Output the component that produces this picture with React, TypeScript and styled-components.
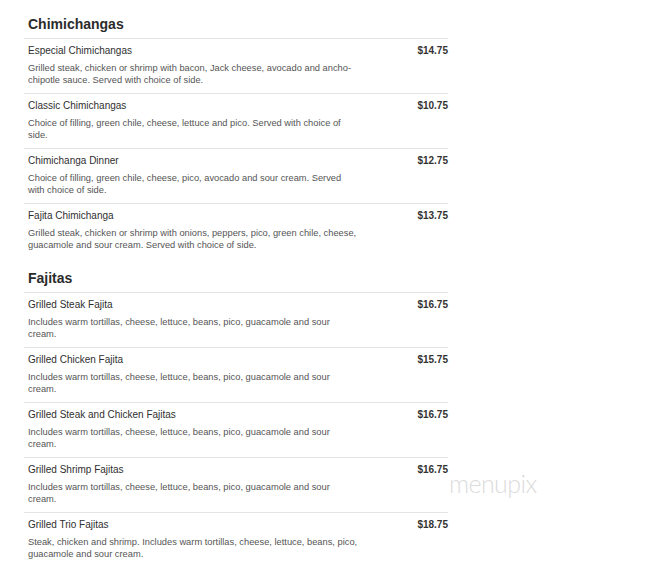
import React from 'react'
import styled, { createGlobalStyle } from 'styled-components'

const GlobalStyle = createGlobalStyle`
  html, body {
    margin: 0;
    padding: 0;
    background: #fff;
  }
  body {
    font-family: "Liberation Sans", Arial, sans-serif;
  }
`

const Page = styled.div`
  position: relative;
  width: 661px;
  height: 567px;
  overflow: hidden;
  padding: 16px 0 0 24px;
  box-sizing: border-box;
`

const Menu = styled.div`
  width: 424px;
`

const Section = styled.section`
  & + & {
    margin-top: 12px;
  }
`

const SectionTitle = styled.h2`
  margin: 0;
  padding: 0 0 5px 4px;
  font-size: 14px;
  line-height: 17px;
  font-weight: bold;
  color: #2b2b2b;
`

const Item = styled.div`
  display: flex;
  justify-content: space-between;
  align-items: flex-start;
  border-top: 1px solid #e4e4e4;
  padding: 5px 0 6px 4px;
  height: 55px;
  box-sizing: border-box;
`

const ItemBody = styled.div`
  width: 332px;
`

const ItemName = styled.div`
  font-size: 10px;
  line-height: 14px;
  color: #2f2f2f;
`

const ItemDesc = styled.div`
  margin-top: 3.5px;
  font-size: 9.3px;
  line-height: 12.5px;
  color: #555;
`

const Price = styled.div`
  font-size: 10px;
  line-height: 14px;
  font-weight: bold;
  color: #333;
`

const Watermark = styled.div`
  position: absolute;
  left: 449px;
  top: 477px;
  font-family: Lato, "Open Sans", sans-serif;
  font-weight: 300;
  font-size: 25px;
  line-height: 12px;
  letter-spacing: -0.6px;
  color: #dcdcdc;
  pointer-events: none;
`

type MenuItem = { name: string; desc: string; price: string }

const sections: { title: string; items: MenuItem[] }[] = [
  {
    title: 'Chimichangas',
    items: [
      {
        name: 'Especial Chimichangas',
        desc: 'Grilled steak, chicken or shrimp with bacon, Jack cheese, avocado and ancho-chipotle sauce. Served with choice of side.',
        price: '$14.75',
      },
      {
        name: 'Classic Chimichangas',
        desc: 'Choice of filling, green chile, cheese, lettuce and pico. Served with choice of side.',
        price: '$10.75',
      },
      {
        name: 'Chimichanga Dinner',
        desc: 'Choice of filling, green chile, cheese, pico, avocado and sour cream. Served with choice of side.',
        price: '$12.75',
      },
      {
        name: 'Fajita Chimichanga',
        desc: 'Grilled steak, chicken or shrimp with onions, peppers, pico, green chile, cheese, guacamole and sour cream. Served with choice of side.',
        price: '$13.75',
      },
    ],
  },
  {
    title: 'Fajitas',
    items: [
      {
        name: 'Grilled Steak Fajita',
        desc: 'Includes warm tortillas, cheese, lettuce, beans, pico, guacamole and sour cream.',
        price: '$16.75',
      },
      {
        name: 'Grilled Chicken Fajita',
        desc: 'Includes warm tortillas, cheese, lettuce, beans, pico, guacamole and sour cream.',
        price: '$15.75',
      },
      {
        name: 'Grilled Steak and Chicken Fajitas',
        desc: 'Includes warm tortillas, cheese, lettuce, beans, pico, guacamole and sour cream.',
        price: '$16.75',
      },
      {
        name: 'Grilled Shrimp Fajitas',
        desc: 'Includes warm tortillas, cheese, lettuce, beans, pico, guacamole and sour cream.',
        price: '$16.75',
      },
      {
        name: 'Grilled Trio Fajitas',
        desc: 'Steak, chicken and shrimp. Includes warm tortillas, cheese, lettuce, beans, pico, guacamole and sour cream.',
        price: '$18.75',
      },
    ],
  },
]

const App = () => {
  return (
    <Page>
      <GlobalStyle />
      <Menu>
        {sections.map((section) => (
          <Section key={section.title}>
            <SectionTitle>{section.title}</SectionTitle>
            {section.items.map((item) => (
              <Item key={item.name}>
                <ItemBody>
                  <ItemName>{item.name}</ItemName>
                  <ItemDesc>{item.desc}</ItemDesc>
                </ItemBody>
                <Price>{item.price}</Price>
              </Item>
            ))}
          </Section>
        ))}
      </Menu>
      <Watermark>menupix</Watermark>
    </Page>
  )
}

export default App
